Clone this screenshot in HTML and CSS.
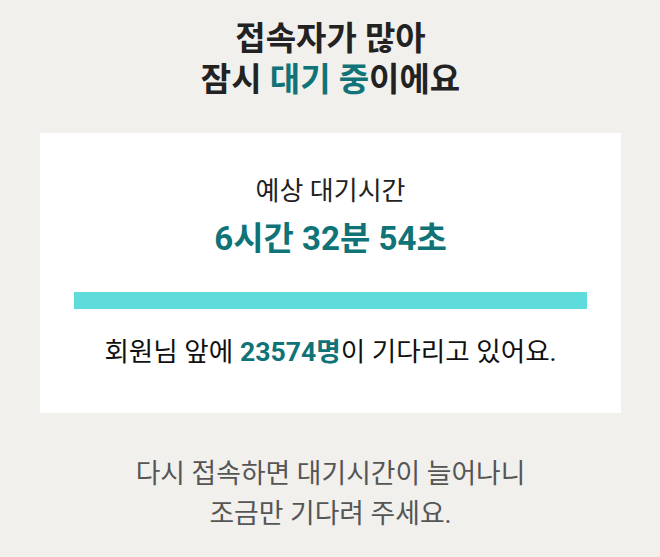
FILE: index.html
```html
<!DOCTYPE html>
<html lang="ko">
<head>
    <meta charset="UTF-8">
    <meta name="viewport" content="width=device-width, initial-scale=1.0">
    <title>대기 안내</title>
    <link rel="stylesheet" href="styles.css">
</head>
<body>
    <h1 class="title">접속자가 많아<br>잠시 <em>대기 중</em>이에요</h1>

    <div class="wait-card">
        <p class="wait-label">예상 대기시간</p>
        <p class="wait-time">6시간 32분 54초</p>
        <div class="progress">
            <div class="progress-fill" style="width: 100%"></div>
        </div>
        <p class="queue">회원님 앞에 <strong>23574명</strong>이 기다리고 있어요.</p>
    </div>

    <p class="notice">다시 접속하면 대기시간이 늘어나니<br>조금만 기다려 주세요.</p>
</body>
</html>
```

FILE: styles.css
```css
body {
    margin: 0;
    padding: 18px 39px 0 40px;
    font-family: Roboto, "Noto Sans CJK KR", sans-serif;
    background-color: #f1f0ed;
    color: #222;
    text-align: center;
}
.title {
    font-size: 33px;
    line-height: 41px;
    font-weight: 700;
    margin: 0 0 33px 0;
    color: #222;
}
.title em {
    font-style: normal;
    color: #0f7377;
}
.wait-card {
    background-color: #fff;
    padding: 41px 34px 44px;
}
.wait-label {
    margin: 0;
    font-size: 26px;
    line-height: 34px;
    color: #222;
}
.wait-time {
    margin: 11px 0 0 0;
    font-size: 33px;
    line-height: 40px;
    font-weight: 700;
    color: #0f7377;
}
.progress {
    margin-top: 33px;
    height: 17px;
    background-color: #e6e6e6;
}
.progress-fill {
    height: 100%;
    background-color: #5ddcdb;
}
.queue {
    margin: 26px 0 0 0;
    font-size: 26.6px;
    line-height: 34px;
    color: #111;
}
.queue strong {
    color: #0f7377;
    font-weight: 700;
}
.notice {
    margin: 41px 0 0 0;
    font-size: 26.8px;
    line-height: 40px;
    color: #555;
}
```
